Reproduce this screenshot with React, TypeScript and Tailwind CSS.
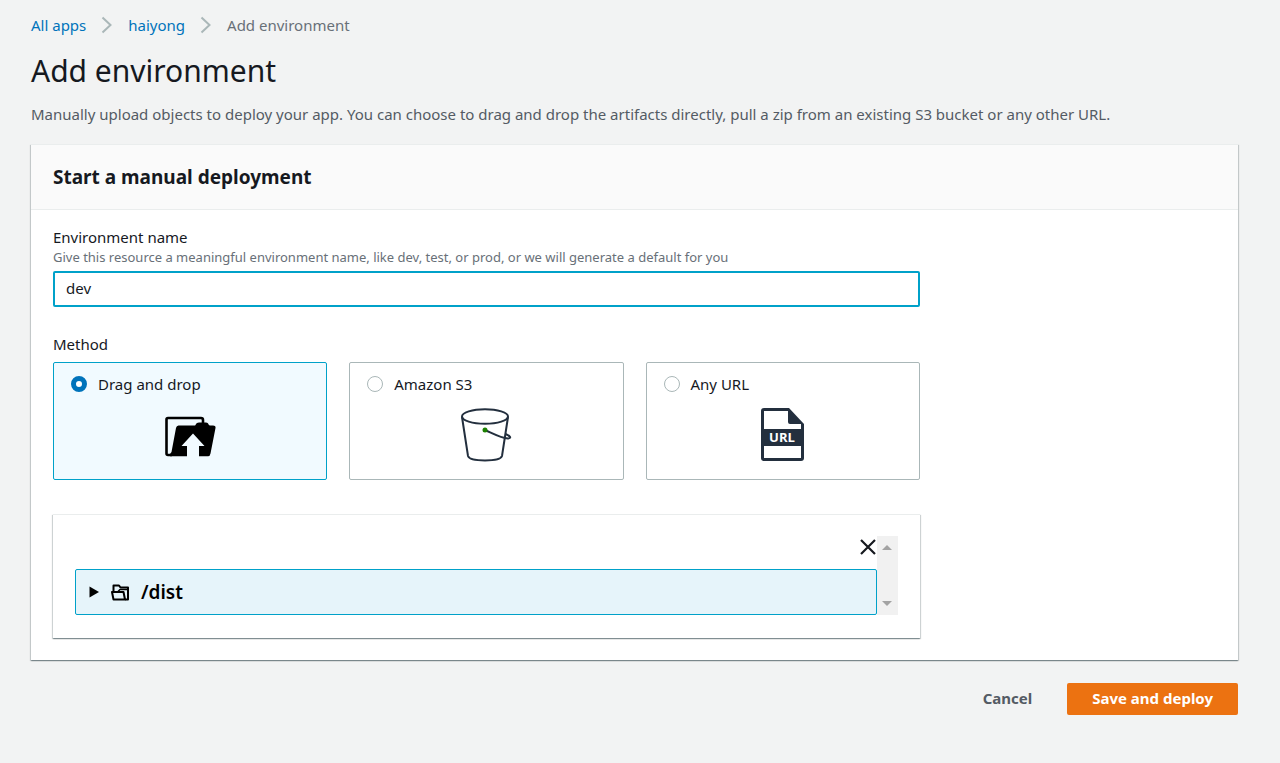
import { useState } from "react";

const METHODS = [
  { id: "drag", label: "Drag and drop", Icon: UploadFolderIcon },
  { id: "s3", label: "Amazon S3", Icon: BucketIcon },
  { id: "url", label: "Any URL", Icon: UrlFileIcon },
];

function Chevron() {
  return (
    <svg width="12" height="18" viewBox="0 0 12 18" fill="none" stroke="#aab7b8" strokeWidth="2" aria-hidden="true">
      <path d="M1.5 1.5L9.5 9L1.5 16.5" />
    </svg>
  );
}

function UploadFolderIcon() {
  return (
    <svg width="52" height="54" viewBox="0 0 52 54" aria-hidden="true">
      <path
        d="M8 47H4Q2.500 47 2.500 45.500V11.500Q2.500 10 4 10H37Q39 10 39 12V18"
        fill="none"
        stroke="#000"
        strokeWidth="2.6"
      />
      <path d="M14.500 17.500H31C32 17.500 31.500 14.500 35 14.500H42C45 14.500 44 17.500 46 17.500H49Q52 17.500 51.500 20L46.500 45.500Q46 48.300 44 48.300H35V38H40.500L29 25.500L17.500 38H23V48.300H6V46L7.500 44L12 20Q12.500 17.500 14.500 17.500Z" />
    </svg>
  );
}

function BucketIcon() {
  return (
    <svg width="54" height="54" viewBox="0 0 54 54" fill="none" stroke="#232f3e" strokeWidth="2" aria-hidden="true">
      <ellipse cx="26" cy="8.500" rx="23" ry="7.300" />
      <path d="M3 9L9 48C10 51 17 52.500 26 52.500C35 52.500 42 51 43 48L49 9" />
      <path d="M26 22C33 25 42 30 49 30.500C53 30 51 28 46.500 26" />
      <circle cx="26" cy="22" r="2.500" fill="#1d8102" stroke="none" />
    </svg>
  );
}

function UrlFileIcon() {
  return (
    <svg width="44" height="54" viewBox="0 0 44 54" aria-hidden="true">
      <path d="M3 0H28L43 16V50Q43 53 40 53H3Q0 53 0 50V3Q0 0 3 0Z" fill="#232f3e" />
      <path d="M3 3H27V14Q27 16 29 16H40V21H3Z" fill="#fff" />
      <path d="M3 38H40V50H3Z" fill="#fff" />
      <text
        x="21"
        y="34"
        textAnchor="middle"
        fill="#fff"
        className="font-['Open_Sans',sans-serif] text-[13px] font-bold"
      >
        URL
      </text>
    </svg>
  );
}

function FolderIcon() {
  return (
    <svg
      width="18"
      height="18"
      viewBox="0 0 18 18"
      fill="none"
      stroke="#000"
      strokeWidth="2"
      strokeLinejoin="round"
      aria-hidden="true"
    >
      <path d="M2.500 9V2.500H8L9.500 4.500H17V16.500H14" />
      <path d="M1 9H12.500L14 16.500H2.500Z" />
      <path d="M6.500 9L9 6.500H16" strokeWidth="1.500" />
    </svg>
  );
}

export default function App() {
  const [name, setName] = useState("dev");
  const [method, setMethod] = useState("drag");

  return (
    <div className="min-h-screen bg-[#f2f3f3] pt-3 pr-[42px] pb-12 pl-[31px] font-['Noto_Sans',sans-serif] text-[15px] leading-[22px] text-[#16191f]">
      <nav aria-label="Breadcrumbs" className="flex items-center gap-[15px] pt-[2px]">
        <a href="#apps" className="text-[#0073bb]">
          All apps
        </a>
        <Chevron />
        <a href="#haiyong" className="text-[#0073bb]">
          haiyong
        </a>
        <Chevron />
        <span className="text-[#687078]">Add environment</span>
      </nav>

      <h1 className="mt-[14px] text-[30px] leading-[42px]">Add environment</h1>
      <p className="mt-[11px] text-[#545b64]">
        Manually upload objects to deploy your app. You can choose to drag and drop the artifacts directly, pull a zip
        from an existing S3 bucket or any other URL.
      </p>

      <section className="mt-[19px] border-t border-[#eaeded] bg-white shadow-[0_1px_1px_0_rgba(0,28,36,0.3),1px_1px_1px_0_rgba(0,28,36,0.15),-1px_1px_1px_0_rgba(0,28,36,0.15)]">
        <header className="border-b border-[#eaeded] bg-[#fafafa] px-[22px] py-5">
          <h2 className="text-[19px] leading-6 font-bold">Start a manual deployment</h2>
        </header>

        <div className="grid grid-cols-4 gap-[22px] px-[22px] pt-4 pb-[22px]">
          <div className="col-span-3">
            <label htmlFor="env-name" className="block">
              Environment name
            </label>
            <p id="env-hint" className="text-[13px] leading-[18px] text-[#687078]">
              Give this resource a meaningful environment name, like dev, test, or prod, or we will generate a default
              for you
            </p>
            <input
              id="env-name"
              type="text"
              aria-describedby="env-hint"
              value={name}
              onChange={(e) => setName(e.target.value)}
              className="mt-[5px] h-9 w-full rounded-xs border-2 border-[#00a1c9] bg-white px-[11px] pb-[2px] outline-none"
            />

            <fieldset className="mt-[26px]">
              <legend>Method</legend>
              <div className="mt-[7px] grid grid-cols-3 gap-[22px]">
                {METHODS.map(({ id, label, Icon }) => (
                  <label
                    key={id}
                    className={`flex h-[118px] flex-col rounded-xs border px-[17px] pt-[10px] ${
                      method === id ? "border-[#00a1c9] bg-[#f1faff]" : "border-[#aab7b8] bg-white"
                    }`}
                  >
                    <span className="flex items-center gap-[11px]">
                      <input
                        type="radio"
                        name="method"
                        value={id}
                        checked={method === id}
                        onChange={() => setMethod(id)}
                        className="size-4 appearance-none rounded-full border border-[#aab7b8] bg-white checked:border-5 checked:border-[#0073bb]"
                      />
                      {label}
                    </span>
                    <span className="mt-[13px] flex justify-center">
                      <Icon />
                    </span>
                  </label>
                ))}
              </div>
            </fieldset>

            <div className="mt-[34px] border-t border-[#eaeded] bg-white px-[22px] pt-[21px] pb-[23px] shadow-[0_1px_1px_0_rgba(0,28,36,0.3),1px_1px_1px_0_rgba(0,28,36,0.15),-1px_1px_1px_0_rgba(0,28,36,0.15)]">
              <div className="flex">
                <div className="flex-1">
                  <div className="flex h-[33px] justify-end pt-[3px] pr-px">
                    <button type="button" aria-label="Remove files" className="size-4">
                      <svg width="16" height="16" viewBox="0 0 16 16" stroke="#16191f" strokeWidth="2.2" aria-hidden="true">
                        <path d="M1 1L15 15M15 1L1 15" />
                      </svg>
                    </button>
                  </div>
                  <button
                    type="button"
                    className="flex h-[46px] w-full items-center rounded-xs border border-[#00a1c9] bg-[#e6f4fa] px-[13px] text-[19px] leading-6 font-semibold text-black"
                  >
                    <svg width="10" height="12" viewBox="0 0 10 12" className="mr-3" aria-hidden="true">
                      <path d="M0.500 0.500L10 6L0.500 11.500Z" />
                    </svg>
                    <FolderIcon />
                    <span className="ml-3">/dist</span>
                  </button>
                </div>
                <div className="flex w-[21px] flex-col items-center justify-between bg-[#f1f1f1] py-[9px]">
                  <svg width="10" height="5" viewBox="0 0 10 5" fill="#a3a3a3" aria-hidden="true">
                    <path d="M0 5L5 0L10 5Z" />
                  </svg>
                  <svg width="10" height="5" viewBox="0 0 10 5" fill="#a3a3a3" aria-hidden="true">
                    <path d="M0 0L5 5L10 0Z" />
                  </svg>
                </div>
              </div>
            </div>
          </div>
        </div>
      </section>

      <div className="mt-[23px] flex justify-end gap-[10px] font-bold">
        <button type="button" className="h-8 px-[25px] pb-[2px] text-[#545b64]">
          Cancel
        </button>
        <button type="button" className="h-8 rounded-xs bg-[#ec7211] px-[25px] pb-[2px] text-white">
          Save and deploy
        </button>
      </div>
    </div>
  );
}
